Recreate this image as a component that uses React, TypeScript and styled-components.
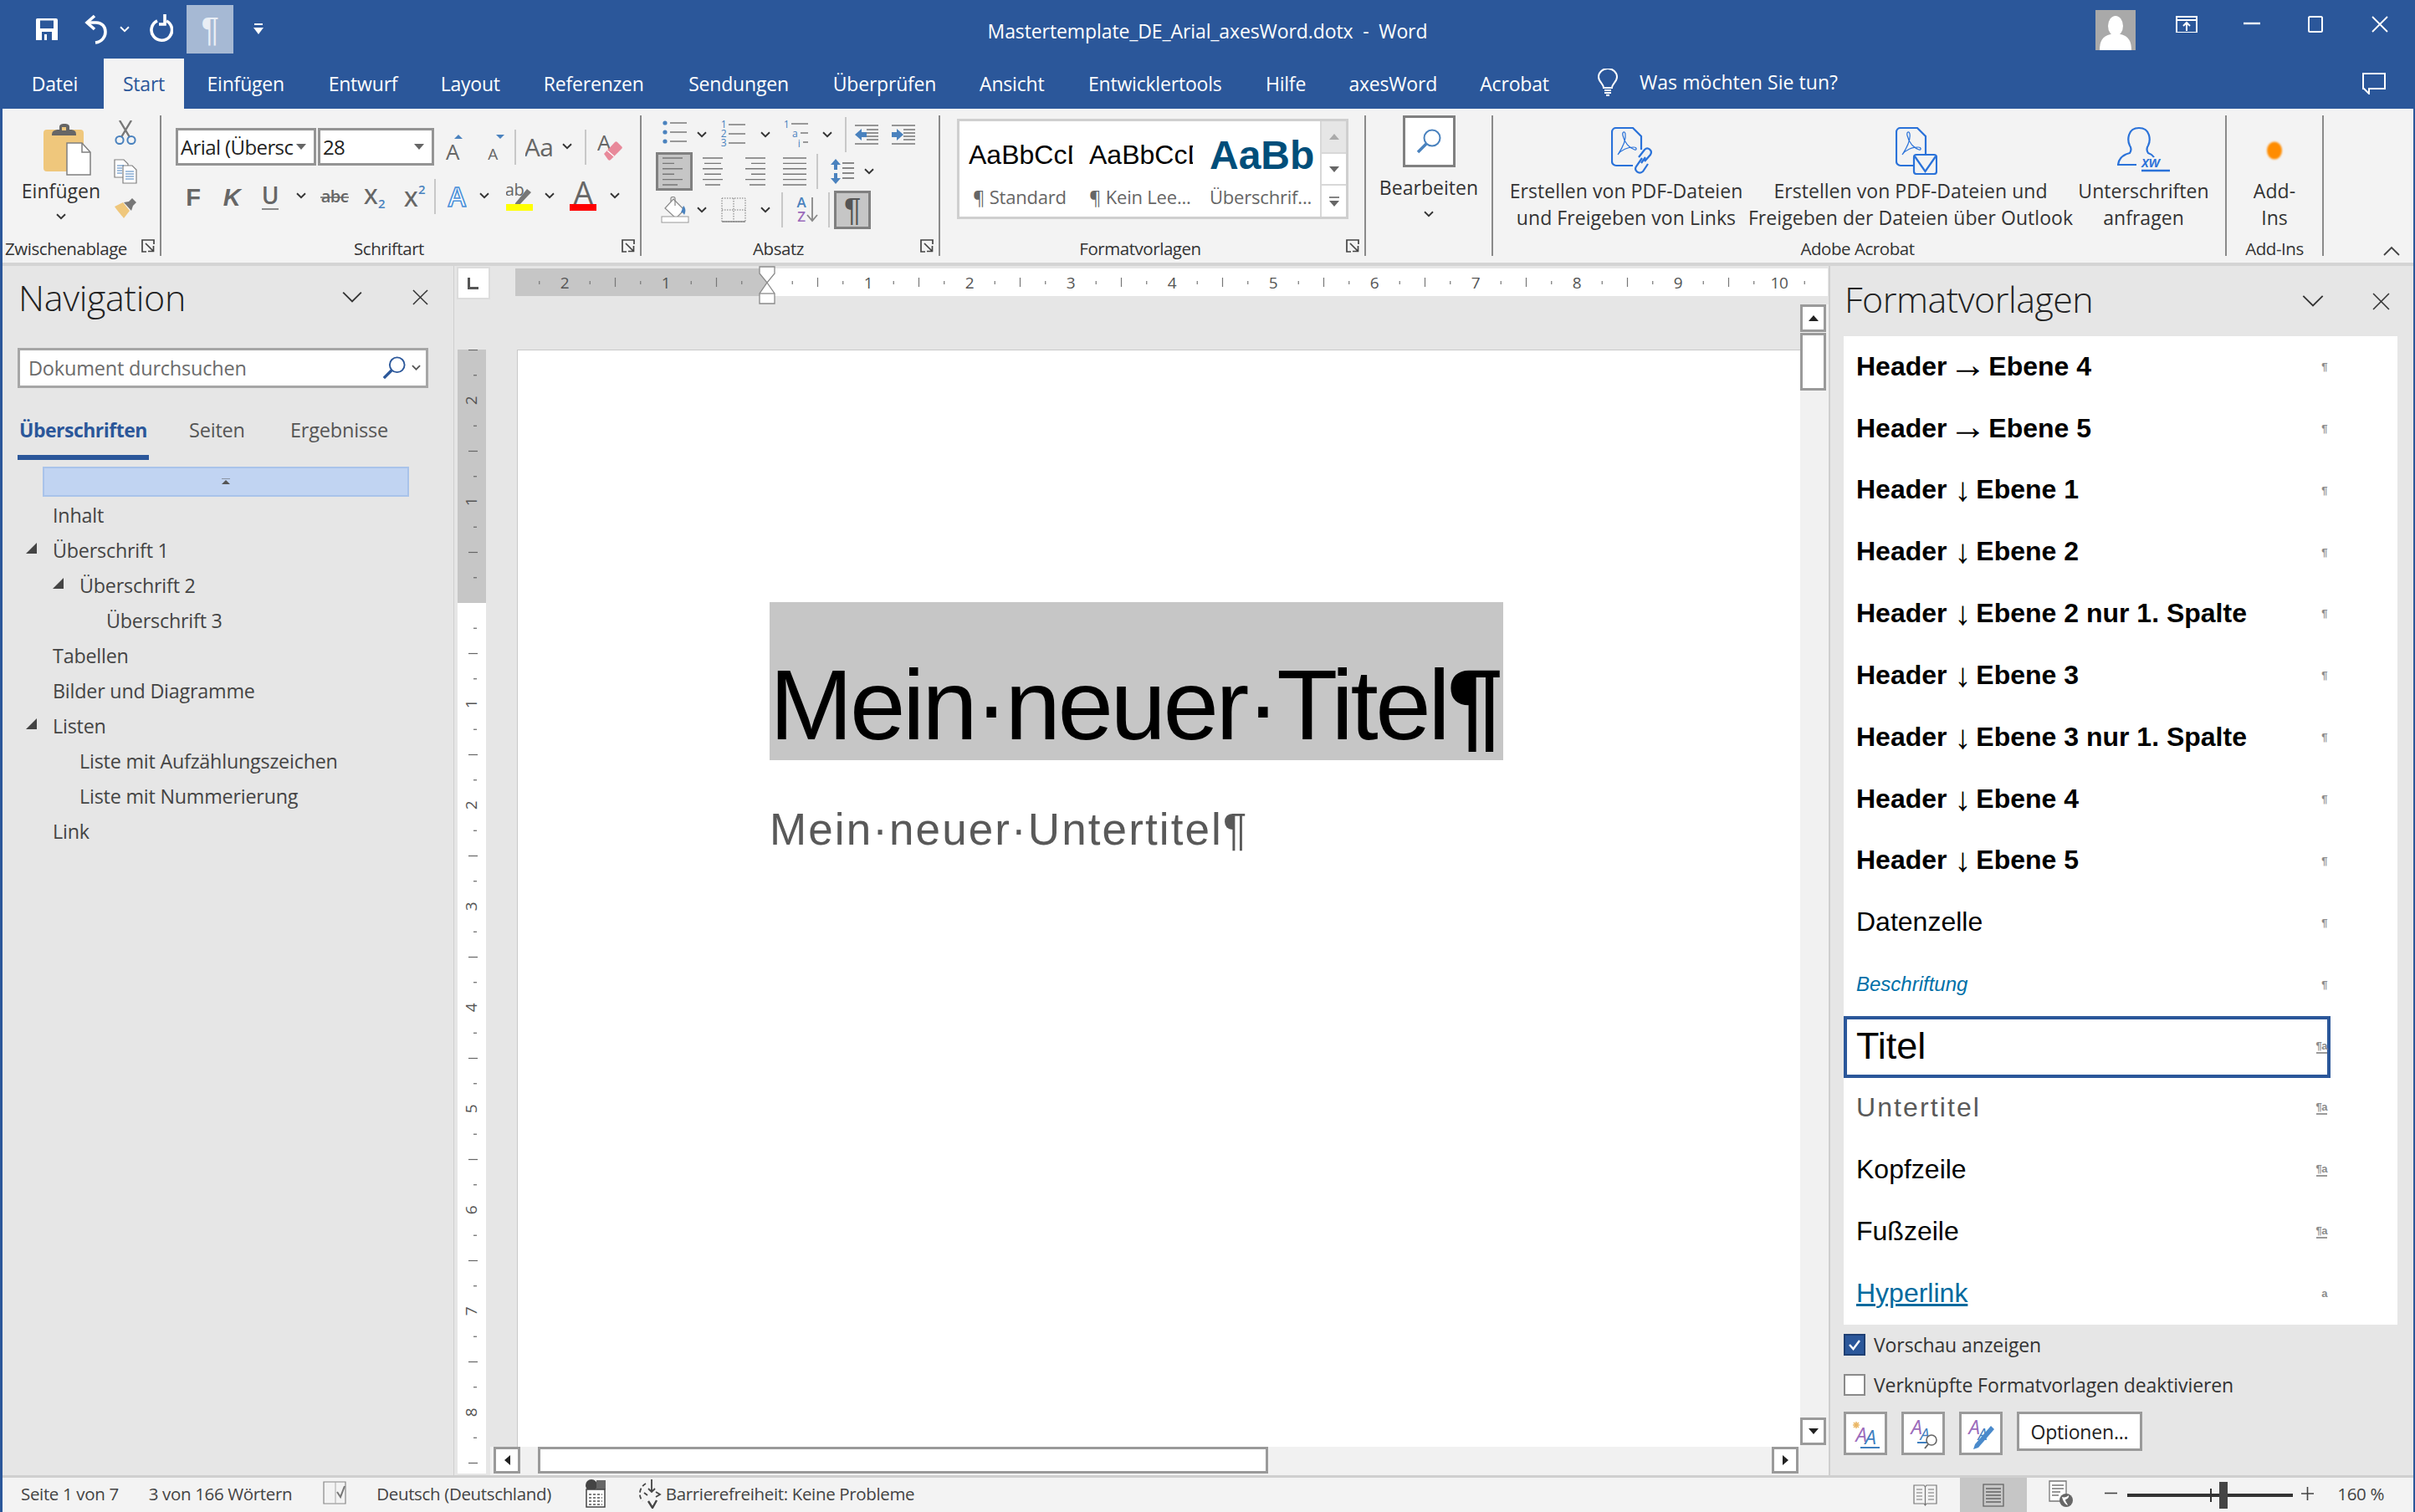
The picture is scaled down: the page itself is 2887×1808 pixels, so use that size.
import React from "react";
import styled, { createGlobalStyle } from "styled-components";

const UI = `"Open Sans", "Noto Sans", sans-serif`;
const ARIAL = `"Liberation Sans", Arial, sans-serif`;
const BLUE = "#2b579a";
const GREY = "#666666";
const ICONBLUE = "#4a82be";
const PDF = "#2a72d9";

const Global = createGlobalStyle`
  html, body { margin: 0; padding: 0; background: ${BLUE}; }
  * { box-sizing: border-box; }
`;

const Frame = styled.div`
  width: 2887px; height: 1808px; background: ${BLUE}; display: flex; flex-direction: column;
  overflow: hidden; font-family: ${UI}; color: #333; letter-spacing: -0.45px;
`;
/* ---------- title bar ---------- */
const TitleBar = styled.header`
  height: 70px; display: grid; grid-template-columns: 1fr auto 1fr; align-items: center; color: #fff;
`;
const Qat = styled.div`display: flex; align-items: center; padding-left: 43px;`;
const QatItem = styled.div<{ $ml?: number }>`display: flex; margin-left: ${p => p.$ml ?? 0}px;`;
const QatActive = styled.div`
  width: 56px; height: 58px; margin-left: 16px; background: #a6b9d4; display: flex; align-items: center; justify-content: center;
  font: 40px ${ARIAL}; color: #e9eef5;
`;
const DocTitle = styled.div`font-size: 23px; white-space: pre; letter-spacing: -0.1px; padding-top: 4px;`;
const WinControls = styled.div`display: flex; justify-content: flex-end; align-items: flex-start; padding: 0 32px 0 0; height: 70px;`;
const Avatar = styled.div`width: 48px; height: 48px; margin-top: 12px; background: #a9a9a9; overflow: hidden;`;
const WinBtn = styled.div<{ $ml: number }>`margin-top: 19px; margin-left: ${p => p.$ml}px; display: flex;`;

/* ---------- tabs ---------- */
const TabBar = styled.nav`height: 60px; display: flex; align-items: stretch; padding-left: 7px; color: #fff; font-size: 23px; letter-spacing: -0.2px;`;
const Tab = styled.div<{ $w: number; $active?: boolean }>`
  width: ${p => p.$w}px; display: flex; align-items: center; justify-content: center;
  background: ${p => (p.$active ? "#f3f3f3" : "transparent")}; color: ${p => (p.$active ? BLUE : "#fff")};
`;
const TellMe = styled.div`display: flex; align-items: center; gap: 26px; margin-left: 32px; font-size: 23px; padding-bottom: 4px; letter-spacing: 0.05px;`;
const TabEnd = styled.div`margin-left: auto; margin-right: 35px; display: flex; align-items: center;`;

/* ---------- ribbon ---------- */
const Body = styled.div`margin: 0 2px 0 3px; flex: 1; display: flex; flex-direction: column; min-height: 0;`;
const Ribbon = styled.section`
  height: 188px; background: #f3f3f3; border-bottom: 4px solid #d4d4d4; display: flex; align-items: flex-start; position: relative;
`;
const Group = styled.div<{ $w: number }>`
  width: ${p => p.$w}px; height: 168px; margin-top: 8px; border-right: 2px solid #8a8a8a; display: flex; flex-direction: column; flex: none;
`;
const GroupBody = styled.div<{ $pl?: number; $pt?: number; $gap?: number; $row?: boolean }>`
  flex: 1; display: flex; flex-direction: ${p => (p.$row ? "row" : "column")}; padding-left: ${p => p.$pl ?? 0}px; padding-top: ${p => p.$pt ?? 0}px;
  gap: ${p => p.$gap ?? 0}px; min-height: 0;
`;
const GroupFoot = styled.div<{ $pr?: number }>`
  height: 24px; position: relative; display: flex; justify-content: center; align-items: center; padding-right: ${p => p.$pr ?? 0}px;
  font-size: 20.5px; color: #333; top: 3px;
`;
const Launcher = styled.div`position: absolute; right: 6px; top: 1px; display: flex;`;
const BigLabel = styled.div<{ $mt?: number }>`font-size: 23px; color: #333; text-align: center; line-height: 32px; white-space: nowrap; letter-spacing: 0.05px; margin-top: ${p => p.$mt ?? 0}px;`;
const ColCenter = styled.div<{ $w: number; $pt?: number }>`
  width: ${p => p.$w}px; display: flex; flex-direction: column; align-items: center; padding-top: ${p => p.$pt ?? 0}px; flex: none;
`;
const IconSlot = styled.div<{ $h: number; $pl?: number }>`height: ${p => p.$h}px; padding-left: ${p => p.$pl ?? 0}px; display: flex; align-items: center; justify-content: center;`;
const ToolCol = styled.div`display: flex; flex-direction: column; align-items: center; width: 40px; padding-top: 6px; gap: 17px;`;
const Row = styled.div<{ $h: number }>`display: flex; align-items: center; height: ${p => p.$h}px;`;
const Tool = styled.div<{ $w: number; $ml?: number }>`
  width: ${p => p.$w}px; margin-left: ${p => p.$ml ?? 0}px; height: 100%; display: flex; align-items: center; justify-content: center; flex: none;
`;
const Sep = styled.div<{ $ml?: number; $h?: number }>`
  width: 2px; height: ${p => p.$h ?? 42}px; background: #c8c8c8; flex: none; margin-left: ${p => p.$ml ?? 0}px;
`;
const Combo = styled.div<{ $w: number; $ml?: number }>`
  width: ${p => p.$w}px; height: 45px; margin-left: ${p => p.$ml ?? 0}px; background: #fff; border: 3px solid #949494; display: flex; align-items: center;
  justify-content: space-between; padding: 0 9px 0 3px; font-size: 24px; color: #222; flex: none; letter-spacing: -0.6px;
`;
const ActiveTool = styled.div<{ $ml?: number; $bold?: boolean }>`
  width: 44px; height: 46px; margin-left: ${p => p.$ml ?? 0}px; background: #c6c6c6; border: 3px solid #808080; display: flex; align-items: center;
  justify-content: center; flex: none; font: 38px ${ARIAL}; color: #555;
`;
const Gallery = styled.div`
  width: 468px; height: 120px; margin: 4px 0 0 20px; border: 3px solid #cfcfcf; background: #fff; display: flex;
`;
const GalleryItems = styled.div`flex: 1; display: flex; padding-left: 11px; gap: 20px;`;
const GalleryItem = styled.div`width: 124px; display: flex; flex-direction: column; align-items: flex-start; overflow: hidden;`;
const Sample = styled.div<{ $big?: boolean }>`
  height: 75px; display: flex; align-items: center; white-space: nowrap; padding-top: 5px;
  font-family: ${ARIAL}; font-size: ${p => (p.$big ? 48 : 32)}px; font-weight: ${p => (p.$big ? 700 : 400)};
  color: ${p => (p.$big ? "#004e7a" : "#000")}; letter-spacing: 0;
`;
const SampleName = styled.div<{ $pl?: number }>`font-size: 22px; color: #666; white-space: nowrap; padding-left: ${p => p.$pl ?? 0}px; line-height: 30px; letter-spacing: -0.2px;`;
const GalleryScroll = styled.div`width: 31px; display: flex; flex-direction: column; border-left: 2px solid #d8d8d8;`;
const GalleryBtn = styled.div<{ $off?: boolean; $last?: boolean }>`
  flex: 1; display: flex; align-items: center; justify-content: center; background: ${p => (p.$off ? "#e6e6e6" : "#fff")};
  border-bottom: ${p => (p.$last ? "0" : "2px solid #d8d8d8")};
`;
const FindBox = styled.div`width: 63px; height: 62px; background: #fff; border: 3px solid #808080; display: flex; align-items: center; justify-content: center;`;
const Collapse = styled.div`position: absolute; right: 16px; bottom: 8px; display: flex;`;

/* ---------- workspace ---------- */
const Main = styled.main`flex: 1; display: flex; min-height: 0; background: #e6e6e6;`;
const NavPanel = styled.aside`width: 540px; flex: none; border-right: 1px solid #cfcfcf; display: flex; flex-direction: column;`;
const PaneHead = styled.div<{ $pl: number; $pr: number; $h: number; $gap: number }>`
  height: ${p => p.$h}px; display: flex; align-items: center; padding: 0 ${p => p.$pr}px 0 ${p => p.$pl}px; flex: none; gap: ${p => p.$gap}px;
`;
const PaneTitle = styled.div<{ $pb: number; $ls: number }>`font-size: 43px; font-weight: 300; color: #222; flex: 1; letter-spacing: ${p => p.$ls}px; padding-bottom: ${p => p.$pb}px;`;
const Search = styled.div`
  width: 491px; height: 48px; margin: 23px 0 0 18px; background: #fff; border: 3px solid #a6a6a6; display: flex; align-items: center; flex: none;
  padding: 0 6px 0 10px; font-size: 23.5px; color: #6b6b6b; letter-spacing: -0.2px; justify-content: space-between;
`;
const SearchIcons = styled.div`display: flex; align-items: center; gap: 7px;`;
const NavTabs = styled.div`display: flex; margin: 26px 0 0 18px; height: 60px; font-size: 23.5px; color: #555; flex: none; letter-spacing: -0.2px;`;
const NavTab = styled.div<{ $w: number; $active?: boolean }>`
  height: 60px; padding: 0 0 6px ${p => (p.$active ? 2 : 0)}px; display: flex; align-items: center; flex: none;
  width: ${p => p.$w}px; margin-right: ${p => (p.$active ? 48 : 0)}px; white-space: nowrap;
  font-size: ${p => (p.$active ? 23 : 23.5)}px; letter-spacing: ${p => (p.$active ? -0.5 : -0.2)}px;
  font-weight: ${p => (p.$active ? 700 : 400)}; color: ${p => (p.$active ? BLUE : "#555")};
  border-bottom: 6px solid ${p => (p.$active ? BLUE : "transparent")};
`;
const TreeTop = styled.div`
  width: 438px; height: 36px; margin: 8px 0 1px 48px; background: #c1d4f2; border: 2px solid #a9c3ea; display: flex; align-items: center; justify-content: center; flex: none;
`;
const TreeRow = styled.div<{ $level: number }>`
  height: 42px; flex: none; display: flex; align-items: center; padding-left: ${p => 60 + (p.$level - 1) * 32}px; font-size: 23.3px; color: #444;
  position: relative; letter-spacing: -0.2px;
`;
const Twisty = styled.span`position: absolute; margin-left: -32px; display: flex; top: 12px;`;

const Center = styled.div`
  width: 1643px; flex: none; display: grid; grid-template-columns: 43px 32px 1fr 34px; grid-template-rows: 46px 54px 1fr 34px; min-width: 0;
`;
const RulerRow = styled.div`grid-column: 1 / 5; grid-row: 1; display: flex; align-items: flex-start; padding: 1px 0 0 3px;`;
const TabStop = styled.div`
  width: 40px; height: 39px; background: #fff; border: 2px solid #dcdcdc; display: flex; align-items: center; justify-content: center; flex: none;
  margin-right: 30px;
`;
const HRulerSvg = styled.svg`flex: none; display: block; margin-top: -1px;`;
const VRulerSvg = styled.svg`display: block;`;
const VRuler = styled.div`grid-column: 1; grid-row: 3 / 5; padding-left: 4px; overflow: hidden; min-height: 0;`;
const VScroll = styled.div`grid-column: 4; grid-row: 2 / 4; display: flex; flex-direction: column; background: #f1f1f1; padding-bottom: 2px; min-height: 0;`;
const ScrollBtn = styled.div<{ $w?: number; $h?: number }>`
  width: ${p => p.$w ?? 31}px; height: ${p => p.$h ?? 33}px; background: #fff; border: 3px solid #9a9a9a; display: flex; align-items: center; justify-content: center; flex: none;
`;
const VThumb = styled.div`width: 31px; height: 69px; margin-top: 1px; background: #fff; border: 3px solid #9a9a9a; flex: none;`;
const Spacer = styled.div`flex: 1;`;
const Page = styled.article`
  grid-column: 3; grid-row: 3; background: #fff; border-top: 1px solid #c9c9c9; border-left: 1px solid #c9c9c9; padding: 301px 0 0 301px; min-height: 0; min-width: 0; overflow: hidden;
  font-family: ${ARIAL}; letter-spacing: 0;
`;
const TitleText = styled.div`
  width: 877px; height: 189px; background: #c6c6c6; font-size: 119.5px; line-height: 133px; padding: 56px 0 0 0; color: #000; white-space: nowrap; letter-spacing: -3.45px;
`;
const Pilcrow = styled.span`font-weight: 700; letter-spacing: 0;`;
const SubText = styled.div`
  font-size: 53px; line-height: 60px; margin-top: 53px; color: #595959; letter-spacing: 2.1px; white-space: nowrap;
`;
const HScroll = styled.div`grid-column: 2 / 5; grid-row: 4; background: #f1f1f1; display: flex; padding-left: 4px; padding-right: 36px;`;
const HThumb = styled.div`width: 873px; height: 32px; margin-left: 21px; background: #fff; border: 3px solid #9a9a9a; flex: none;`;

const StylePanel = styled.aside`width: 699px; flex: none; border-left: 2px solid #cfcfcf; display: flex; flex-direction: column; min-width: 0;`;
const StyleList = styled.div`width: 662px; height: 1182px; margin-left: 16px; background: #fff; flex: none;`;
const StyleRow = styled.div<{ $sel?: boolean }>`
  width: 582px; height: 73.875px; border: 4px solid ${p => (p.$sel ? BLUE : "transparent")}; display: flex; align-items: center; justify-content: space-between; padding: 0 0 0 11px;
  font-family: ${ARIAL}; letter-spacing: 0; color: #000;
`;
const StyleName = styled.span<{ $v: string }>`
  white-space: nowrap; padding-bottom: 2px;
  ${p => ({
    bold: "font-size:32px;font-weight:700;",
    plain: "font-size:32px;",
    cap: "font-size:24px;font-style:italic;color:#0070a8;",
    title: "font-size:45px;",
    sub: "font-size:32px;color:#595959;letter-spacing:2.1px;",
    link: "font-size:32px;color:#006a9e;text-decoration:underline;",
  }[p.$v])}
`;
const Arrow = styled.span`
  display: inline-block; width: 45px; margin: 0 -6.5px; position: relative; top: 2px; text-align: center; font-family: "Liberation Serif", serif; font-weight: 400; font-size: 45px; line-height: 30px;
`;
const ArrowDown = styled.span`
  display: inline-block; width: 17px; position: relative; top: 3px; text-align: center; font-family: "Liberation Serif", serif; font-weight: 400; font-size: 40px; line-height: 30px;
`;
const Mark = styled.span<{ $link?: boolean }>`
  font-size: 13px; font-family: ${ARIAL}; color: #8c8c8c; font-weight: 700; line-height: 14px;
  border-bottom: ${p => (p.$link ? "2px solid #9a9a9a" : "0")}; white-space: nowrap; letter-spacing: -0.5px;
`;
const CheckRow = styled.label<{ $mt: number }>`display: flex; align-items: center; gap: 10px; margin: ${p => p.$mt}px 0 0 16px; font-size: 23px; color: #333; height: 26px; flex: none; letter-spacing: -0.1px;`;
const Check = styled.span<{ $on?: boolean }>`
  width: 26px; height: 26px; background: ${p => (p.$on ? BLUE : "#fff")}; border: 2px solid ${p => (p.$on ? "#1e3f73" : "#8a8a8a")}; display: flex; align-items: center; justify-content: center; flex: none;
`;
const StyleBtns = styled.div`display: flex; gap: 17px; margin: 19px 0 0 16px; align-items: flex-start;`;
const SquareBtn = styled.div`width: 52px; height: 52px; border: 3px solid #9a9a9a; background: #fff; display: flex; align-items: center; justify-content: center; flex: none;`;
const TextBtn = styled.div`width: 150px; height: 47px; border: 3px solid #9a9a9a; background: #fff; display: flex; align-items: center; justify-content: center; font-size: 23px; color: #222; flex: none; letter-spacing: -0.2px;`;

/* ---------- status bar ---------- */
const Status = styled.footer`
  height: 44px; background: #f3f3f3; border-top: 3px solid #cfcfcf; display: flex; align-items: center; font-size: 20.5px; color: #444; flex: none; padding-left: 22px; letter-spacing: -0.35px;
`;
const StatusItem = styled.div<{ $ml?: number; $gap?: number }>`margin-left: ${p => p.$ml ?? 0}px; gap: ${p => p.$gap ?? 0}px; display: flex; align-items: center; white-space: nowrap; flex: none; padding-bottom: 4px;`;
const ViewActive = styled.div`width: 80px; height: 41px; margin-left: 27px; background: #c6c6c6; display: flex; align-items: center; justify-content: center; flex: none;`;
const StatusRight = styled.div`margin-left: auto; display: flex; align-items: center; padding-right: 35px; height: 100%;`;
const Zoom = styled.div`width: 198px; height: 4px; margin-left: 12px; background: #333; position: relative; flex: none;`;
const ZoomThumb = styled.div`position: absolute; left: 110px; top: -14px; width: 10px; height: 32px; background: #444;`;
const ZoomTick = styled.div`position: absolute; left: 99px; top: -6px; width: 2px; height: 16px; background: #333;`;

/* ---------- icons ---------- */
const Chev = ({ c = "#333", w = 12, sw = 1.9 }: { c?: string; w?: number; sw?: number }) => (
  <svg width={w} height={w * 0.67} viewBox="0 0 12 8"><path d="M1 1.2l5 5 5-5" stroke={c} strokeWidth={sw} fill="none" /></svg>
);
const Launch = () => (
  <svg width="16" height="16" viewBox="0 0 16 16" fill="none" stroke="#444" strokeWidth="1.7">
    <path d="M15 6V1H1v14h5" /><path d="M5 5l9.5 9.5M14.5 8v6.5H8" />
  </svg>
);
const Txt = (p: { x: number; y: number; s: number; c?: string; w?: number; t: string; i?: boolean; f?: string; a?: "start" | "middle" }) => (
  <text x={p.x} y={p.y} fontSize={p.s} fill={p.c ?? GREY} fontWeight={p.w ?? 600} fontStyle={p.i ? "italic" : "normal"} fontFamily={p.f ?? "Open Sans, sans-serif"} textAnchor={p.a ?? "middle"}>{p.t}</text>
);
const Save = () => (
  <svg width="26" height="26" viewBox="0 0 26 26"><path fillRule="evenodd" fill="#fff" d="M0 1.5A1.5 1.5 0 011.5 0H24a2 2 0 012 2v24H0zM5 2.5V12h16V2.5zM7 16v10h12V16zM10 19h3v7h-3z" /></svg>
);
const Undo = () => (
  <svg width="28" height="38" viewBox="0 0 28 38" fill="none" stroke="#fff" strokeWidth="3.6"><path d="M12 3L3 11l9 8" /><path d="M3 11h11c7 0 11 5 11 11s-4 12-12 13" /></svg>
);
const Redo = () => (
  <svg width="28" height="36" viewBox="0 0 28 36" fill="none" stroke="#fff" strokeWidth="3.6"><path d="M20 8a12.3 12.3 0 11-11-.2" /><path d="M18 0v12h-7" /></svg>
);
const Custom = () => (
  <svg width="12" height="14" viewBox="0 0 12 14"><path d="M1 1h10" stroke="#fff" strokeWidth="2" /><path d="M0 5h12l-6 8z" fill="#fff" /></svg>
);
const Person = () => (
  <svg width="48" height="48" viewBox="0 0 48 48"><ellipse cx="24" cy="19" rx="9" ry="12" fill="#fff" /><path d="M5 48c0-10 3-17 13-19h12c10 2 13 9 13 19z" fill="#fff" /></svg>
);
const Display = () => (
  <svg width="26" height="20" viewBox="0 0 26 20" fill="none" stroke="#fff" strokeWidth="2"><path d="M1 1h24v19H1zM1 5h24" /><path d="M13 18V8M9 12l4-4 4 4" /></svg>
);
const Minim = () => <svg width="20" height="20" viewBox="0 0 20 20"><path d="M0 9h20" stroke="#fff" strokeWidth="2.4" /></svg>;
const Maxim = () => <svg width="18" height="20" viewBox="0 0 18 20"><rect x="1" y="1" width="16" height="18" rx="1.5" fill="none" stroke="#fff" strokeWidth="2" /></svg>;
const Close = ({ c = "#fff", s = 20, sw = 1.8 }: { c?: string; s?: number; sw?: number }) => (
  <svg width={s} height={s} viewBox="0 0 20 20"><path d="M1 1l18 18M19 1L1 19" stroke={c} strokeWidth={sw} /></svg>
);
const Bulb = () => (
  <svg width="24" height="33" viewBox="0 0 24 33" fill="none" stroke="#fff" strokeWidth="2"><path d="M7 23c0-5-6-7-6-13a11 10 0 0122 0c0 6-6 8-6 13z" /><path d="M8 26h8M8 29h8" /><path d="M10 32h4" strokeWidth="2.4" /></svg>
);
const Comment = () => (
  <svg width="28" height="26" viewBox="0 0 28 26" fill="none" stroke="#fff" strokeWidth="2"><path d="M1 1h26v18H8v6l-6-6H1z" /></svg>
);
const Paste = () => (
  <svg width="58" height="62" viewBox="0 0 58 62">
    <rect x="1" y="7" width="48" height="50" rx="4" fill="#efc77c" />
    <path d="M11 14c0-5 2-7 9-7V4c0-3 2-4 6-4s6 1 6 4v3c7 0 8 2 8 7z" fill="#666" /><rect x="23" y="4" width="5" height="4" fill="#efc77c" />
    <path d="M29 23h18l10 11v27H29z" fill="#fff" stroke="#808080" strokeWidth="1.5" /><path d="M47 23v11h10" fill="none" stroke="#808080" strokeWidth="1.5" />
  </svg>
);
const Scissors = () => (
  <svg width="26" height="29" viewBox="0 0 26 29" fill="none"><path d="M6 0l12 20M20 0L8 20" stroke="#777" strokeWidth="2.4" /><circle cx="6" cy="23.5" r="4.6" stroke={ICONBLUE} strokeWidth="2" /><circle cx="20" cy="23.5" r="4.6" stroke={ICONBLUE} strokeWidth="2" /></svg>
);
const Copy = () => (
  <svg width="28" height="30" viewBox="0 0 28 30" fill="#fff" stroke="#808080" strokeWidth="1.2">
    <path d="M1 1h11l5 5v16H1z" /><path d="M11 8h11l5 5v16H11z" />
    <path d="M4 8h8M4 11h6M4 14h6M4 17h6M14 15h10M14 18h10M14 21h10M14 24h10" stroke={ICONBLUE} strokeWidth="1.2" fill="none" />
  </svg>
);
const Brush = () => (
  <svg width="26" height="24" viewBox="0 0 26 24"><path d="M0 10l10-5 8 10-7 9c-3-4-8-9-11-14z" fill="#efc77c" /><path d="M11 5l6-1 4-4 5 5-4 4-2 6z" fill="#777" /></svg>
);
const Grow = ({ s, up }: { s: number; up: boolean }) => (
  <svg width="24" height="34" viewBox="0 0 24 34">
    <Txt x={10} y={32} s={s} t="A" w={500} />
    <path d={up ? "M12 7h10l-5-5z" : "M14 2h10l-5 5z"} fill={ICONBLUE} />
  </svg>
);
const Eraser = () => (
  <svg width="30" height="32" viewBox="0 0 30 32">
    <Txt x={8} y={20} s={26} t="A" w={500} />
    <path d="M8 24l13-14a2 2 0 013 0l5 5a2 2 0 010 3L16 31c-1 1-2 1-3 0z" fill="#e8899a" /><path d="M12 20l8 7" stroke="#fff" strokeWidth="1.2" />
  </svg>
);
const TextFx = () => (
  <svg width="24" height="30" viewBox="0 0 24 30"><text x="12" y="27" fontSize="32" fill="#fff" stroke="#4a90d9" strokeWidth="1.6" textAnchor="middle" fontFamily="Open Sans, sans-serif" fontWeight="600">A</text></svg>
);
const Highlight = () => (
  <svg width="32" height="36" viewBox="0 0 32 36">
    <Txt x={10} y={17} s={20} t="ab" w={500} />
    <path d="M11 26l14-17 5 4-15 16-5 1z" fill="#777" /><rect x="0" y="27" width="32" height="8" fill="#ff0" />
  </svg>
);
const FontColor = () => (
  <svg width="32" height="36" viewBox="0 0 32 36"><Txt x={16} y={28} s={38} t="A" w={500} /><rect x="0" y="27" width="32" height="8" fill="#f00" /></svg>
);
const LineIcon = ({ lines }: { lines: [number, number][] }) => (
  <svg width="28" height="36" viewBox="0 0 28 36"><path d={lines.map(([a, b], i) => `M${a} ${2 + i * 6.4}H${b}`).join("")} stroke="#777" strokeWidth="1.4" /></svg>
);
const Bullets = () => (
  <svg width="30" height="36" viewBox="0 0 30 36">
    {[4, 15, 26].map(y => <g key={y}><circle cx="3" cy={y} r="2.6" fill={ICONBLUE} /><path d={`M9 ${y}h20`} stroke="#666" strokeWidth="1.3" /></g>)}
  </svg>
);
const Numbers = () => (
  <svg width="30" height="36" viewBox="0 0 30 36">
    {["1", "2", "3"].map((t, i) => <g key={t}><Txt x={3} y={10 + i * 11} s={12} c={ICONBLUE} w={400} t={t} /><path d={`M9 ${6 + i * 11}h20`} stroke="#666" strokeWidth="1.3" /></g>)}
  </svg>
);
const Multi = () => (
  <svg width="30" height="36" viewBox="0 0 30 36">
    <Txt x={3} y={10} s={12} c={ICONBLUE} w={400} t="1" /><path d="M9 5h20" stroke="#666" strokeWidth="1.3" />
    <Txt x={13} y={21} s={12} c={ICONBLUE} w={400} t="a" /><path d="M20 16h9" stroke="#666" strokeWidth="1.3" />
    <Txt x={18} y={33} s={12} c={ICONBLUE} w={400} t="i" /><path d="M23 27h6" stroke="#666" strokeWidth="1.3" />
  </svg>
);
const Indent = ({ out }: { out: boolean }) => (
  <svg width="28" height="24" viewBox="0 0 28 24">
    <path d="M0 1h28M14 6h14M14 10h14M14 14h14M14 18h14M0 23h28" stroke="#777" strokeWidth="1.3" />
    <path d={out ? "M0 12l8-7v4h6v6H8v4z" : "M14 12l-8-7v4H0v6h6v4z"} fill={ICONBLUE} />
  </svg>
);
const LineSpace = () => (
  <svg width="28" height="30" viewBox="0 0 28 30">
    <path d="M6 0l6 7H8v6H4V7H0zM6 30l6-7H8v-6H4v6H0z" fill={ICONBLUE} />
    <path d="M14 5h14M14 11h14M14 17h14M14 23h14" stroke="#666" strokeWidth="1.4" />
  </svg>
);
const Shading = () => (
  <svg width="34" height="32" viewBox="0 0 34 32">
    <path d="M15 3l13 13-10 10L5 14z" fill="#fff" stroke="#888" strokeWidth="1.2" /><path d="M12 6V2c0-2 5-2 5 0v9" fill="none" stroke="#888" strokeWidth="1.2" />
    <path d="M27 11c3 3 3 7 1 11-1-2-2-3-4-3z" fill={ICONBLUE} /><rect x="1" y="24" width="32" height="7" fill="#fff" stroke="#999" />
  </svg>
);
const Borders = () => (
  <svg width="30" height="30" viewBox="0 0 30 30" fill="none"><rect x="1" y="1" width="28" height="28" stroke="#777" strokeDasharray="1.5 1.5" /><path d="M15 1v28M1 15h28" stroke="#777" strokeDasharray="1.5 1.5" /><path d="M1 29h28" stroke="#888" strokeWidth="1.5" /></svg>
);
const Sort = () => (
  <svg width="28" height="32" viewBox="0 0 28 32">
    <Txt x={7} y={13} s={17} c={ICONBLUE} t="A" /><Txt x={7} y={30} s={17} c="#9b6bbb" t="Z" />
    <path d="M20 1v28M14 22l6 7 6-7" stroke="#888" strokeWidth="1.8" fill="none" />
  </svg>
);
const Up = ({ c = "#aaa" }: { c?: string }) => <svg width="12" height="7" viewBox="0 0 12 7"><path d="M0 7l6-7 6 7z" fill={c} /></svg>;
const Down = ({ c = "#666" }: { c?: string }) => <svg width="12" height="7" viewBox="0 0 12 7"><path d="M0 0l6 7 6-7z" fill={c} /></svg>;
const More = () => <svg width="12" height="12" viewBox="0 0 12 12"><path d="M0 1h12" stroke="#666" strokeWidth="1.6" /><path d="M0 5l6 7 6-7z" fill="#666" /></svg>;
const Magnifier = ({ s = 30, c = ICONBLUE }: { s?: number; c?: string }) => (
  <svg width={s} height={s} viewBox="0 0 30 30" fill="none"><circle cx="19" cy="11" r="9.5" stroke={c} strokeWidth="2" /><path d="M12 18L2 28" stroke={c} strokeWidth="3.6" /></svg>
);
const Squiggle = () => <path d="M8 33C14 24 18 14 17 8c-1-4-4-2-3 2 2 9 8 15 14 17 3 1 3-3-1-3-7 0-15 3-19 9z" fill="none" stroke={PDF} strokeWidth="1.2" />;
const PdfLink = () => (
  <svg width="50" height="57" viewBox="0 0 50 57" fill="none" stroke={PDF} strokeWidth="2.2">
    <path d="M26 46H6a5 5 0 01-5-5V6a5 5 0 015-5h20l10 10v16" /><Squiggle />
    <path d="M33 36l7-9c4-4 10 1 7 6l-7 8M37 37l-7 10c-3 5 3 10 8 6l6-9M36 43l5-7" />
  </svg>
);
const PdfMail = () => (
  <svg width="50" height="57" viewBox="0 0 50 57" fill="none" stroke={PDF} strokeWidth="2.2">
    <path d="M21 46H6a5 5 0 01-5-5V6a5 5 0 015-5h20l10 10v22" /><Squiggle />
    <rect x="22" y="33" width="27" height="23" rx="3" /><path d="M23 35l12.5 18L48 35" />
  </svg>
);
const Signature = () => (
  <svg width="64" height="58" viewBox="0 0 64 58" fill="none" stroke={PDF} strokeWidth="2.2">
    <path d="M23 46H1c1-8 6-12 14-14 2-3 2-6 0-9-3-6-3-21 11-21s14 15 11 21c-2 3-2 6 0 9 3 1 5 2 7 5" />
    <path d="M29 53h34" strokeWidth="2.6" /><text x="29" y="49" fontSize="18" fill={PDF} stroke="none" fontStyle="italic" fontFamily="Open Sans, sans-serif" fontWeight="600">xw</text>
  </svg>
);
const Dot = () => (
  <svg width="24" height="26" viewBox="0 0 24 26"><defs><filter id="b"><feGaussianBlur stdDeviation="1.2" /></filter></defs><ellipse cx="12" cy="13" rx="9" ry="10.5" fill="#ff8c00" filter="url(#b)" /></svg>
);
const Tri = () => <svg width="13" height="13" viewBox="0 0 13 13"><path d="M13 0v13H0z" fill="#444" /></svg>;
const CheckMark = () => <svg width="16" height="14" viewBox="0 0 16 14"><path d="M2 7l4.5 5L14 2" stroke="#fff" strokeWidth="2.4" fill="none" /></svg>;

const NewStyle = () => (
  <svg width="36" height="36" viewBox="0 0 36 36">
    <path d="M3 8h8M7 4v8M4 5l6 6M10 5l-6 6" stroke="#eab766" strokeWidth="1.6" />
    <Txt x={13} y={28} s={24} c="#9b6bbb" t="A" i w={400} /><Txt x={24} y={31} s={24} c="#3f7fbf" t="A" i w={400} /><path d="M12 35h23" stroke="#3f7fbf" strokeWidth="2" />
  </svg>
);
const Inspect = () => (
  <svg width="36" height="38" viewBox="0 0 36 38">
    <Txt x={10} y={20} s={24} c="#9b6bbb" t="A" i w={400} /><Txt x={20} y={27} s={20} c="#3f7fbf" t="A" i w={400} /><path d="M11 30h14" stroke="#3f7fbf" strokeWidth="2" />
    <circle cx="28" cy="27" r="6" fill="#fff" stroke="#666" strokeWidth="1.6" /><path d="M24 32l-4 5" stroke="#666" strokeWidth="2" />
  </svg>
);
const Manage = () => (
  <svg width="36" height="38" viewBox="0 0 36 38">
    <Txt x={10} y={20} s={24} c="#9b6bbb" t="A" i w={400} /><Txt x={20} y={27} s={20} c="#3f7fbf" t="A" i w={400} />
    <path d="M30 10l4 4-19 22-6 2 2-6z" fill="#4a8acb" />
  </svg>
);
const ReadView = () => (
  <svg width="29" height="28" viewBox="0 0 29 28" fill="none" stroke="#777" strokeWidth="1.2">
    <path d="M1 2h12l1.5 2L16 2h12v22H16l-1.5 2-1.5-2H1z" /><path d="M14.5 4v22M4 7h7M4 11h7M4 15h7M4 19h7M18 7h7M18 11h7M18 15h7M18 19h7" />
  </svg>
);
const PrintView = () => (
  <svg width="26" height="28" viewBox="0 0 26 28" fill="none" stroke="#666" strokeWidth="1.3"><rect x="1" y="1" width="24" height="26" /><path d="M4 6h18M4 10h18M4 14h18M4 18h18M4 22h18" /></svg>
);
const WebView = () => (
  <svg width="30" height="32" viewBox="0 0 30 32">
    <path d="M1 1h20v24H1z" fill="#fff" stroke="#777" strokeWidth="1.3" /><path d="M4 6h14M4 10h14M4 14h10M4 18h8" stroke="#777" strokeWidth="1.3" />
    <circle cx="21" cy="24" r="8" fill="#666" /><path d="M16 20c3 1 6 0 8-2 1 3-3 5-4 5 0 3 2 4 3 7-3-1-6-5-7-10z" fill="#fff" />
  </svg>
);
const Proof = () => (
  <svg width="28" height="32" viewBox="0 0 28 32" fill="none"><path d="M1 2h26v26H1z" stroke="#888" strokeWidth="1.2" /><path d="M15 2v26" stroke="#aaa" /><path d="M17 14l4 6 5-13" stroke="#777" strokeWidth="2" /></svg>
);
const Macro = () => (
  <svg width="26" height="34" viewBox="0 0 26 34"><circle cx="8" cy="7" r="7" fill="#444" /><rect x="14" y="1" width="11" height="11" fill="#666" /><rect x="2" y="12" width="22" height="21" fill="#fff" stroke="#444" strokeWidth="1.5" /><path d="M5 18h16M5 22h16M5 26h16M5 30h16" stroke="#555" strokeWidth="1.5" strokeDasharray="3 2" /></svg>
);
const Access = () => (
  <svg width="30" height="36" viewBox="0 0 30 36" fill="none" stroke="#444" strokeWidth="1.8"><path d="M8 6a14 14 0 00-4 21" strokeDasharray="5 3" /><path d="M15 1v15M11 12l4 4 4-4M20 16l5 3-5 3M10 20l-4-3" /><path d="M11 27l5 8 5-9" strokeWidth="2.4" /></svg>
);

const HRuler = () => {
  const z = 301; const ticks = [];
  for (let q = -10; q <= 43; q++) {
    if (q === 0) continue;
    const x = z + q * 30.25; const inch = q % 4 === 0;
    if (inch) ticks.push(<Txt key={q} x={x} y={27} s={19} c="#555" w={400} t={String(Math.abs(q / 4))} />);
    else if (Math.abs(q % 2) === 1) ticks.push(<path key={q} d={`M${x} 18v4`} stroke="#777" strokeWidth="1.2" />);
    else ticks.push(<path key={q} d={`M${x} 14v11`} stroke="#777" strokeWidth="1.2" />);
  }
  return (
    <HRulerSvg width="1570" height="46" viewBox="0 0 1570 46">
      <rect x="0" y="3" width={z} height="33" fill="#c6c6c6" /><rect x={z} y="3" width="1268" height="33" fill="#fff" />
      {ticks}
      <path d="M292 1h18v8l-9 11-9-11zM301 20l9 13v12h-18V33z" fill="#fff" stroke="#8a8a8a" strokeWidth="1.3" /><path d="M292 33h18" stroke="#8a8a8a" strokeWidth="1.3" />
    </HRulerSvg>
  );
};
const VRulerDraw = () => {
  const z = 303; const ticks = [];
  for (let q = -10; q <= 42; q++) {
    if (q === 0) continue;
    const y = z + q * 30.25; const inch = q % 4 === 0;
    if (inch) ticks.push(<g key={q} transform={`translate(23 ${y}) rotate(-90)`}><Txt x={0} y={0} s={19} c="#555" w={400} t={String(Math.abs(q / 4))} /></g>);
    else if (Math.abs(q % 2) === 1) ticks.push(<path key={q} d={`M19 ${y}h4`} stroke="#666" strokeWidth="1.2" />);
    else ticks.push(<path key={q} d={`M13 ${y}h11`} stroke="#666" strokeWidth="1.2" />);
  }
  return (
    <VRulerSvg width="34" height="1344" viewBox="0 0 34 1344">
      <rect width="34" height={z} fill="#c6c6c6" /><rect y={z} width="34" height="1041" fill="#fff" />
      {ticks}
    </VRulerSvg>
  );
};

const tabs: [string, number, boolean?][] = [
  ["Datei", 117], ["Start", 96, true], ["Einfügen", 147.5], ["Entwurf", 133], ["Layout", 123.5], ["Referenzen", 171.5], ["Sendungen", 175],
  ["Überprüfen", 174], ["Ansicht", 130.5], ["Entwicklertools", 211.5], ["Hilfe", 101], ["axesWord", 155.5], ["Acrobat", 135],
];
const styleRows: [string, string, string, boolean?][] = [
  ["Header → Ebene 4", "bold", "¶"], ["Header → Ebene 5", "bold", "¶"], ["Header ↓ Ebene 1", "bold", "¶"], ["Header ↓ Ebene 2", "bold", "¶"],
  ["Header ↓ Ebene 2 nur 1. Spalte", "bold", "¶"], ["Header ↓ Ebene 3", "bold", "¶"], ["Header ↓ Ebene 3 nur 1. Spalte", "bold", "¶"],
  ["Header ↓ Ebene 4", "bold", "¶"], ["Header ↓ Ebene 5", "bold", "¶"], ["Datenzelle", "plain", "¶"], ["Beschriftung", "cap", "¶"],
  ["Titel", "title", "¶a", true], ["Untertitel", "sub", "¶a", true], ["Kopfzeile", "plain", "¶a", true], ["Fußzeile", "plain", "¶a", true], ["Hyperlink", "link", "a"],
];
const tree: [string, number, boolean?][] = [
  ["Inhalt", 1], ["Überschrift 1", 1, true], ["Überschrift 2", 2, true], ["Überschrift 3", 3], ["Tabellen", 1], ["Bilder und Diagramme", 1],
  ["Listen", 1, true], ["Liste mit Aufzählungszeichen", 2], ["Liste mit Nummerierung", 2], ["Link", 1],
];
const renderStyleName = (t: string) => {
  const m = t.match(/^(.*?)([→↓])(.*)$/);
  if (!m) return t;
  return <>{m[1]}{m[2] === "→" ? <Arrow>{m[2]}</Arrow> : <ArrowDown>{m[2]}</ArrowDown>}{m[3]}</>;
};

export default function App() {
  return (
    <Frame>
      <Global />
      <TitleBar>
        <Qat>
          <QatItem><Save /></QatItem>
          <QatItem $ml={32}><Undo /></QatItem>
          <QatItem $ml={14}><Chev c="#fff" /></QatItem>
          <QatItem $ml={24}><Redo /></QatItem>
          <QatActive>¶</QatActive>
          <QatItem $ml={24}><Custom /></QatItem>
        </Qat>
        <DocTitle>{"Mastertemplate_DE_Arial_axesWord.dotx  -  Word"}</DocTitle>
        <WinControls>
          <Avatar><Person /></Avatar>
          <WinBtn $ml={48}><Display /></WinBtn>
          <WinBtn $ml={55}><Minim /></WinBtn>
          <WinBtn $ml={57}><Maxim /></WinBtn>
          <WinBtn $ml={58}><Close /></WinBtn>
        </WinControls>
      </TitleBar>
      <TabBar>
        {tabs.map(([t, w, a]) => <Tab key={t} $w={w} $active={a}>{t}</Tab>)}
        <TellMe><Bulb />Was möchten Sie tun?</TellMe>
        <TabEnd><Comment /></TabEnd>
      </TabBar>
      <Body>
        <Ribbon>
          <Group $w={190}>
            <GroupBody $row $pl={13}>
              <ColCenter $w={114} $pt={8}>
                <IconSlot $h={66} $pl={14}><Paste /></IconSlot>
                <BigLabel>Einfügen</BigLabel>
                <IconSlot $h={30}><Chev /></IconSlot>
              </ColCenter>
              <ToolCol><Scissors /><Copy /><Brush /></ToolCol>
            </GroupBody>
            <GroupFoot $pr={36}>Zwischenablage<Launcher><Launch /></Launcher></GroupFoot>
          </Group>
          <Group $w={574}>
            <GroupBody $pl={17} $pt={15} $gap={14}>
              <Row $h={45}>
                <Combo $w={168}>Arial (Übersc<Down /></Combo>
                <Combo $w={139} $ml={2}>28<Down /></Combo>
                <Tool $w={47}><Grow s={26} up /></Tool>
                <Tool $w={49}><Grow s={19} up={false} /></Tool>
                <Sep />
                <Tool $w={54}><svg width="32" height="26" viewBox="0 0 32 26"><Txt x={16} y={24} s={30} t="Aa" w={500} /></svg></Tool>
                <Tool $w={14}><Chev /></Tool>
                <Sep $ml={14} />
                <Tool $w={55}><Eraser /></Tool>
              </Row>
              <Row $h={45}>
                <Tool $w={42}><svg width="20" height="30" viewBox="0 0 20 30"><Txt x={10} y={26} s={29} t="F" w={700} f="Liberation Sans, sans-serif" /></svg></Tool>
                <Tool $w={50}><svg width="26" height="30" viewBox="0 0 26 30"><Txt x={13} y={26} s={29} t="K" w={700} i f="Liberation Sans, sans-serif" /></svg></Tool>
                <Tool $w={42}><svg width="22" height="32" viewBox="0 0 22 32"><Txt x={11} y={25} s={28} t="U" w={600} /><path d="M1 31h20" stroke={GREY} strokeWidth="1.5" /></svg></Tool>
                <Tool $w={32}><Chev /></Tool>
                <Tool $w={48}><svg width="34" height="24" viewBox="0 0 34 24"><Txt x={17} y={19} s={20} t="abc" w={600} /><path d="M0 13h34" stroke={GREY} strokeWidth="1.6" /></svg></Tool>
                <Tool $w={46}><svg width="28" height="30" viewBox="0 0 28 30"><Txt x={10} y={24} s={26} t="X" /><Txt x={23} y={29} s={15} c={ICONBLUE} t="2" /></svg></Tool>
                <Tool $w={49}><svg width="28" height="30" viewBox="0 0 28 30"><Txt x={10} y={27} s={26} t="X" /><Txt x={23} y={12} s={15} c={ICONBLUE} t="2" /></svg></Tool>
                <Sep />
                <Tool $w={50}><TextFx /></Tool>
                <Tool $w={16}><Chev /></Tool>
                <Tool $w={56} $ml={6}><Highlight /></Tool>
                <Tool $w={16}><Chev /></Tool>
                <Tool $w={50} $ml={7}><FontColor /></Tool>
                <Tool $w={26}><Chev /></Tool>
              </Row>
            </GroupBody>
            <GroupFoot $pr={28}>Schriftart<Launcher><Launch /></Launcher></GroupFoot>
          </Group>
          <Group $w={357}>
            <GroupBody $pl={17} $pt={2}>
              <Row $h={42}>
                <Tool $w={45}><Bullets /></Tool>
                <Tool $w={20}><Chev /></Tool>
                <Tool $w={56}><Numbers /></Tool>
                <Tool $w={20}><Chev /></Tool>
                <Tool $w={54}><Multi /></Tool>
                <Tool $w={20}><Chev /></Tool>
                <Sep $ml={11} />
                <Tool $w={38} $ml={5}><Indent out /></Tool>
                <Tool $w={34} $ml={8}><Indent out={false} /></Tool>
              </Row>
              <Row $h={46}>
                <ActiveTool><LineIcon lines={[[0, 24], [0, 14], [0, 24], [0, 14], [0, 24], [0, 18]]} /></ActiveTool>
                <Tool $w={48}><LineIcon lines={[[2, 26], [4, 24], [2, 26], [4, 24], [2, 26], [5, 23]]} /></Tool>
                <Tool $w={52}><LineIcon lines={[[3, 27], [10, 27], [3, 27], [10, 27], [3, 27], [8, 27]]} /></Tool>
                <Tool $w={44}><LineIcon lines={[[0, 28], [0, 28], [0, 28], [0, 28], [0, 28], [0, 28]]} /></Tool>
                <Sep $ml={4} />
                <Tool $w={44} $ml={7}><LineSpace /></Tool>
                <Tool $w={20}><Chev /></Tool>
              </Row>
              <Row $h={46}>
                <Tool $w={45}><Shading /></Tool>
                <Tool $w={20}><Chev /></Tool>
                <Tool $w={56}><Borders /></Tool>
                <Tool $w={20}><Chev /></Tool>
                <Sep $ml={9} />
                <Tool $w={50} $ml={4}><Sort /></Tool>
                <Sep $ml={0} />
                <ActiveTool $ml={5}>¶</ActiveTool>
              </Row>
            </GroupBody>
            <GroupFoot $pr={28}>Absatz<Launcher><Launch /></Launcher></GroupFoot>
          </Group>
          <Group $w={509}>
            <GroupBody>
              <Gallery>
                <GalleryItems>
                  <GalleryItem><Sample>AaBbCcDd</Sample><SampleName $pl={5}>¶ Standard</SampleName></GalleryItem>
                  <GalleryItem><Sample>AaBbCcDd</Sample><SampleName>¶ Kein Lee...</SampleName></GalleryItem>
                  <GalleryItem><Sample $big>AaBb</Sample><SampleName>Überschrif...</SampleName></GalleryItem>
                </GalleryItems>
                <GalleryScroll>
                  <GalleryBtn $off><Up /></GalleryBtn>
                  <GalleryBtn><Down /></GalleryBtn>
                  <GalleryBtn $last><More /></GalleryBtn>
                </GalleryScroll>
              </Gallery>
            </GroupBody>
            <GroupFoot $pr={29}>Formatvorlagen<Launcher><Launch /></Launcher></GroupFoot>
          </Group>
          <Group $w={152}>
            <ColCenter $w={150}>
              <FindBox><Magnifier /></FindBox>
              <BigLabel $mt={8}>Bearbeiten</BigLabel>
              <IconSlot $h={32}><Chev /></IconSlot>
            </ColCenter>
          </Group>
          <Group $w={877}>
            <GroupBody $row>
              <ColCenter $w={318} $pt={10}><IconSlot $h={64} $pl={14}><PdfLink /></IconSlot><BigLabel>Erstellen von PDF-Dateien<br />und Freigeben von Links</BigLabel></ColCenter>
              <ColCenter $w={362} $pt={10}><IconSlot $h={64} $pl={14}><PdfMail /></IconSlot><BigLabel>Erstellen von PDF-Dateien und<br />Freigeben der Dateien über Outlook</BigLabel></ColCenter>
              <ColCenter $w={195} $pt={10}><IconSlot $h={64}><Signature /></IconSlot><BigLabel>Unterschriften<br />anfragen</BigLabel></ColCenter>
            </GroupBody>
            <GroupFoot $pr={4}>Adobe Acrobat</GroupFoot>
          </Group>
          <Group $w={116}>
            <GroupBody>
              <ColCenter $w={114} $pt={10}><IconSlot $h={64}><Dot /></IconSlot><BigLabel>Add-<br />Ins</BigLabel></ColCenter>
            </GroupBody>
            <GroupFoot>Add-Ins</GroupFoot>
          </Group>
          <Collapse><svg width="20" height="12" viewBox="0 0 20 12"><path d="M1 11l9-9 9 9" stroke="#444" strokeWidth="1.8" fill="none" /></svg></Collapse>
        </Ribbon>
        <Main>
          <NavPanel>
            <PaneHead $h={75} $pl={19} $pr={30} $gap={59}>
              <PaneTitle $pb={1} $ls={-0.3}>Navigation</PaneTitle>
              <Chev c="#333" w={26} sw={0.85} />
              <Close c="#333" s={19} sw={1.6} />
            </PaneHead>
            <Search>Dokument durchsuchen<SearchIcons><Magnifier s={28} c={BLUE} /><Chev c="#555" w={11} /></SearchIcons></Search>
            <NavTabs>
              <NavTab $w={157} $active>Überschriften</NavTab>
              <NavTab $w={121}>Seiten</NavTab>
              <NavTab $w={130}>Ergebnisse</NavTab>
            </NavTabs>
            <TreeTop><svg width="10" height="8" viewBox="0 0 10 8"><path d="M0 0h10" stroke="#555" /><path d="M0 7l5-5 5 5z" fill="#555" /></svg></TreeTop>
            {tree.map(([t, l, tw]) => (
              <TreeRow key={t} $level={l}>{tw && <Twisty><Tri /></Twisty>}{t}</TreeRow>
            ))}
          </NavPanel>
          <Center>
            <RulerRow><TabStop><svg width="14" height="14" viewBox="0 0 14 14"><path d="M1 0v13h12" stroke="#555" strokeWidth="4" fill="none" /></svg></TabStop><HRuler /></RulerRow>
            <VRuler><VRulerDraw /></VRuler>
            <VScroll>
              <ScrollBtn><Up c="#222" /></ScrollBtn>
              <VThumb />
              <Spacer />
              <ScrollBtn><Down c="#222" /></ScrollBtn>
            </VScroll>
            <Page>
              <TitleText>Mein·neuer·Titel<Pilcrow>¶</Pilcrow></TitleText>
              <SubText>Mein·neuer·Untertitel¶</SubText>
            </Page>
            <HScroll>
              <ScrollBtn $w={32} $h={32}><svg width="7" height="12" viewBox="0 0 7 12"><path d="M7 0L0 6l7 6z" fill="#222" /></svg></ScrollBtn>
              <HThumb />
              <Spacer />
              <ScrollBtn $w={32} $h={32}><svg width="7" height="12" viewBox="0 0 7 12"><path d="M0 0l7 6-7 6z" fill="#222" /></svg></ScrollBtn>
            </HScroll>
          </Center>
          <StylePanel>
            <PaneHead $h={84} $pl={17} $pr={28} $gap={57}>
              <PaneTitle $pb={6} $ls={-0.5}>Formatvorlagen</PaneTitle>
              <Chev c="#333" w={28} sw={0.8} />
              <Close c="#333" s={21} sw={1.5} />
            </PaneHead>
            <StyleList>
              {styleRows.map(([t, v, m, l]) => (
                <StyleRow key={t} $sel={t === "Titel"}><StyleName $v={v}>{renderStyleName(t)}</StyleName><Mark $link={l}>{m}</Mark></StyleRow>
              ))}
            </StyleList>
            <CheckRow $mt={11}><Check $on><CheckMark /></Check>Vorschau anzeigen</CheckRow>
            <CheckRow $mt={22}><Check />Verknüpfte Formatvorlagen deaktivieren</CheckRow>
            <StyleBtns>
              <SquareBtn><NewStyle /></SquareBtn>
              <SquareBtn><Inspect /></SquareBtn>
              <SquareBtn><Manage /></SquareBtn>
              <TextBtn>Optionen...</TextBtn>
            </StyleBtns>
          </StylePanel>
        </Main>
        <Status>
          <StatusItem>Seite 1 von 7</StatusItem>
          <StatusItem $ml={36}>3 von 166 Wörtern</StatusItem>
          <StatusItem $ml={37}><Proof /></StatusItem>
          <StatusItem $ml={36}>Deutsch (Deutschland)</StatusItem>
          <StatusItem $ml={40}><Macro /></StatusItem>
          <StatusItem $ml={39} $gap={2}><Access />Barrierefreiheit: Keine Probleme</StatusItem>
          <StatusRight>
            <ReadView />
            <ViewActive><PrintView /></ViewActive>
            <StatusItem $ml={26}><WebView /></StatusItem>
            <StatusItem $ml={37}><svg width="15" height="3" viewBox="0 0 15 3"><path d="M0 1.5h15" stroke="#444" strokeWidth="1.6" /></svg></StatusItem>
            <Zoom><ZoomTick /><ZoomThumb /></Zoom>
            <StatusItem $ml={10}><svg width="15" height="16" viewBox="0 0 15 16"><path d="M0 8h15M7.5 0v16" stroke="#444" strokeWidth="1.6" /></svg></StatusItem>
            <StatusItem $ml={28}>160 %</StatusItem>
          </StatusRight>
        </Status>
      </Body>
    </Frame>
  );
}
